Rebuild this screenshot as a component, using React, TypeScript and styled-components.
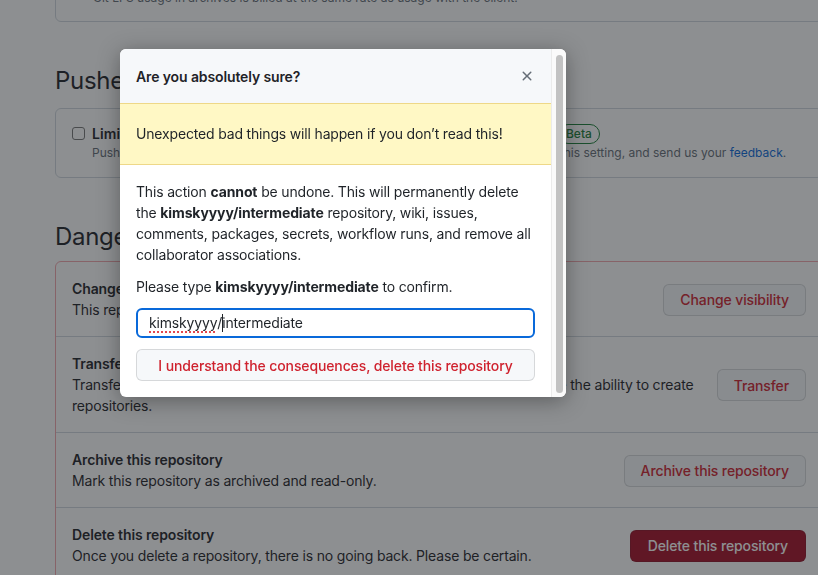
import styled, { createGlobalStyle } from "styled-components";

const GlobalStyle = createGlobalStyle`
  html, body {
    margin: 0;
    padding: 0;
    width: 818px;
    height: 575px;
    overflow: hidden;
    background: #ffffff;
  }
  body {
    font-family: Inter, "Noto Sans", "Liberation Sans", sans-serif;
    color: #1f2328;
    font-size: 14px;
    letter-spacing: -0.17px;
  }
  * {
    box-sizing: border-box;
  }
`;

const Page = styled.div`
  width: 768px;
  margin-left: 55px;
  margin-top: -32px;
`;

const Box = styled.div<{ $danger?: boolean }>`
  border: 1px solid ${(p) => (p.$danger ? "#f3a7ad" : "#d0d7de")};
  border-radius: 6px;
`;

const TopNote = styled.div`
  padding: 20px 16px 14px 37px;
  font-size: 12px;
  line-height: 18px;
  letter-spacing: 0;
  color: #656d76;
`;

const Heading = styled.h2<{ $tight?: boolean }>`
  margin: 44px 0 ${(p) => (p.$tight ? 9 : 12)}px;
  font-size: 24px;
  line-height: 30px;
  font-weight: 400;
  letter-spacing: -0.3px;
`;

const CheckRow = styled.div`
  display: flex;
  gap: 7px;
  padding: 15px 16px;
`;

const CheckBox = styled.span`
  flex-shrink: 0;
  width: 13px;
  height: 13px;
  margin-top: 3px;
  border: 1px solid #767676;
  border-radius: 3px;
  background: #fff;
`;

const CheckLabel = styled.div`
  display: flex;
  align-items: center;
  gap: 8px;
  font-weight: 600;
  line-height: 20px;
  letter-spacing: 0.1px;
`;

const BetaBadge = styled.span`
  display: inline-block;
  padding: 0 7px;
  font-size: 12px;
  font-weight: 500;
  line-height: 18px;
  letter-spacing: 0;
  color: #1a7f37;
  border: 1px solid #1a7f37;
  border-radius: 2em;
`;

const Note = styled.div`
  font-size: 12px;
  line-height: 18px;
  letter-spacing: 0;
  color: #656d76;

  a {
    color: #0969da;
    text-decoration: none;
  }
`;

const DangerRow = styled.div`
  display: flex;
  align-items: center;
  gap: 16px;
  padding: 17px 16px 16px;

  & + & {
    border-top: 1px solid #d0d7de;
  }
`;

const RowText = styled.div`
  flex: 1;
  line-height: 21px;
`;

const RowTitle = styled.div`
  font-weight: 600;
  line-height: 20px;
  letter-spacing: -0.12px;
`;

const DangerButton = styled.button<{ $solid?: boolean }>`
  flex-shrink: 0;
  height: 32px;
  padding: 0 ${(p) => (p.$solid ? 17 : 16)}px;
  font-family: inherit;
  font-size: 14px;
  font-weight: 500;
  letter-spacing: -0.12px;
  border-radius: 6px;
  border: 1px solid rgba(31, 35, 40, 0.15);
  background: ${(p) => (p.$solid ? "#a40e26" : "#f6f8fa")};
  color: ${(p) => (p.$solid ? "#ffffff" : "#cf222e")};
`;

const Backdrop = styled.div`
  position: fixed;
  inset: 0;
  background: rgba(27, 31, 36, 0.5);
`;

const Modal = styled.div`
  position: fixed;
  top: 49px;
  left: 120px;
  width: 446px;
  height: 348px;
  display: flex;
  background: #ffffff;
  border-radius: 6px;
  overflow: hidden;
  box-shadow: 0 4px 22px rgba(0, 0, 0, 0.35);
`;

const ModalMain = styled.div`
  flex: 1;
  display: flex;
  flex-direction: column;
`;

const ModalHeader = styled.div`
  display: flex;
  align-items: center;
  justify-content: space-between;
  height: 54px;
  padding: 0 16px;
  background: #f6f8fa;
`;

const ModalTitle = styled.div`
  font-weight: 600;
  line-height: 20px;
  letter-spacing: -0.12px;
  margin-top: 2px;
`;

const CloseIcon = styled.svg`
  width: 16px;
  height: 16px;
  fill: #656d76;
`;

const Flash = styled.div`
  padding: 20px 16px;
  line-height: 20px;
  background: #fff8c5;
  border-top: 1px solid rgba(212, 167, 44, 0.4);
  border-bottom: 1px solid rgba(212, 167, 44, 0.4);
`;

const ModalBody = styled.div`
  padding: 16px;

  p {
    margin: 0 0 11px;
    line-height: 21px;
  }

  strong {
    letter-spacing: -0.12px;
  }
`;

const FakeInput = styled.div`
  height: 30px;
  display: flex;
  align-items: center;
  border: 2px solid #0969da;
  border-radius: 6px;
  padding: 0 12px 0 11px;
  line-height: 20px;
`;

const Misspelled = styled.span`
  text-decoration: underline dotted #e5484d;
  text-decoration-thickness: 1.5px;
  text-underline-offset: 3px;
`;

const Caret = styled.span`
  display: inline-block;
  width: 1px;
  height: 18px;
  margin-right: -1px;
  background: #1f2328;
`;

const ConfirmButton = styled.button`
  display: block;
  width: 100%;
  height: 32px;
  margin-top: 11px;
  font-family: inherit;
  font-size: 14px;
  font-weight: 500;
  letter-spacing: -0.12px;
  color: #cf222e;
  background: #f6f8fa;
  border: 1px solid rgba(31, 35, 40, 0.15);
  border-radius: 6px;
`;

const ScrollTrack = styled.div`
  width: 15px;
  flex-shrink: 0;
  padding: 6px 3px 4px 4px;
  background: #fafafa;
  border-left: 1px solid #ebebeb;
`;

const ScrollThumb = styled.div`
  height: 100%;
  border-radius: 4px;
  background: #c2c2c2;
`;

export default function App() {
  return (
    <>
      <GlobalStyle />
      <Page>
        <Box>
          <TopNote>
            Git LFS usage in archives is billed at the same rate as usage with the client.
          </TopNote>
        </Box>

        <Heading>Pushes</Heading>
        <Box>
          <CheckRow>
            <CheckBox />
            <div>
              <CheckLabel>
                Limit how many branches and tags can be updated in a single push
                <BetaBadge>Beta</BetaBadge>
              </CheckLabel>
              <Note>
                Pushes will be rejected if they attempt to update more than this. Learn more about
                this setting, and send us your <a href="#">feedback</a>.
              </Note>
            </div>
          </CheckRow>
        </Box>

        <Heading $tight>Danger Zone</Heading>
        <Box $danger>
          <DangerRow>
            <RowText>
              <RowTitle>Change repository visibility</RowTitle>
              This repository is currently public.
            </RowText>
            <DangerButton>Change visibility</DangerButton>
          </DangerRow>
          <DangerRow>
            <RowText>
              <RowTitle>Transfer ownership</RowTitle>
              Transfer this repository to another user or to an organization where you have the
              ability to create repositories.
            </RowText>
            <DangerButton>Transfer</DangerButton>
          </DangerRow>
          <DangerRow>
            <RowText>
              <RowTitle>Archive this repository</RowTitle>
              Mark this repository as archived and read-only.
            </RowText>
            <DangerButton>Archive this repository</DangerButton>
          </DangerRow>
          <DangerRow>
            <RowText>
              <RowTitle>Delete this repository</RowTitle>
              Once you delete a repository, there is no going back. Please be certain.
            </RowText>
            <DangerButton $solid>Delete this repository</DangerButton>
          </DangerRow>
        </Box>
      </Page>

      <Backdrop />

      <Modal>
        <ModalMain>
          <ModalHeader>
            <ModalTitle>Are you absolutely sure?</ModalTitle>
            <CloseIcon viewBox="0 0 16 16">
              <path d="M3.72 3.72a.75.75 0 0 1 1.06 0L8 6.94l3.22-3.22a.749.749 0 0 1 1.275.326.749.749 0 0 1-.215.734L9.06 8l3.22 3.22a.749.749 0 0 1-.326 1.275.749.749 0 0 1-.734-.215L8 9.06l-3.22 3.22a.751.751 0 0 1-1.042-.018.751.751 0 0 1-.018-1.042L6.94 8 3.72 4.78a.75.75 0 0 1 0-1.06Z" />
            </CloseIcon>
          </ModalHeader>
          <Flash>Unexpected bad things will happen if you don’t read this!</Flash>
          <ModalBody>
            <p>
              This action <strong>cannot</strong> be undone. This will permanently delete the{" "}
              <strong>kimskyyyy/intermediate</strong> repository, wiki, issues, comments, packages,
              secrets, workflow runs, and remove all collaborator associations.
            </p>
            <p>
              Please type <strong>kimskyyyy/intermediate</strong> to confirm.
            </p>
            <FakeInput>
              <Misspelled>kimskyyyy</Misspelled>/<Caret />intermediate
            </FakeInput>
            <ConfirmButton>I understand the consequences, delete this repository</ConfirmButton>
          </ModalBody>
        </ModalMain>
        <ScrollTrack>
          <ScrollThumb />
        </ScrollTrack>
      </Modal>
    </>
  );
}
